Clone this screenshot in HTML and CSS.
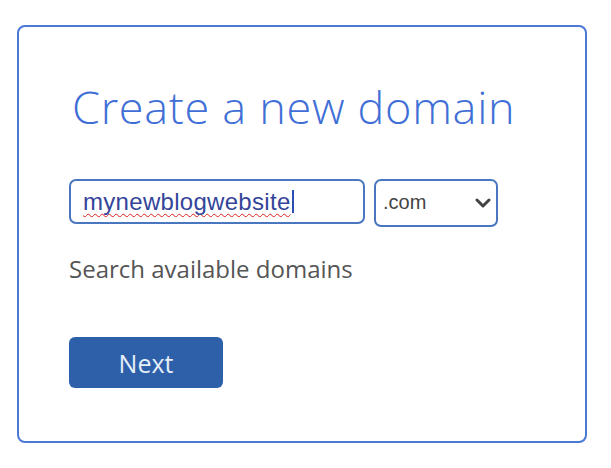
FILE: index.html
```html
<!DOCTYPE html>
<html lang="en">
<head>
    <meta charset="UTF-8">
    <meta name="viewport" content="width=device-width, initial-scale=1.0">
    <title>Create a new domain</title>
    <link rel="stylesheet" href="styles.css">
</head>
<body>
    <div class="card">
        <h1>Create a new domain</h1>
        <div class="domain-row">
            <div class="domain-input">
                <span class="misspelled">mynewblogwebsite</span><span class="caret"></span>
            </div>
            <div class="tld-select">
                <select>
                    <option>.com</option>
                    <option>.net</option>
                    <option>.org</option>
                </select>
                <svg class="chevron" width="16" height="10" viewBox="0 0 16 10">
                    <path d="M2 2 L8 8 L14 2" fill="none" stroke="#444" stroke-width="3" stroke-linejoin="round" stroke-linecap="round"/>
                </svg>
            </div>
        </div>
        <p class="hint">Search available domains</p>
        <button class="next-btn">Next</button>
    </div>
</body>
</html>
```

FILE: styles.css
```css
body {
    margin: 0;
    background-color: #fff;
    font-family: "Open Sans", "Noto Sans", sans-serif;
}

.card {
    box-sizing: border-box;
    margin: 25px 0 0 17px;
    width: 570px;
    height: 418px;
    padding: 54px 50px 0 50px;
    border: 2px solid #4a79d6;
    border-radius: 8px;
}

h1 {
    margin: 0 0 0 3px;
    font-size: 45px;
    line-height: 52px;
    font-weight: 300;
    letter-spacing: 0.7px;
    color: #3f6fd6;
}

.domain-row {
    display: flex;
    align-items: flex-start;
    gap: 9px;
    margin-top: 46px;
}

.domain-input {
    box-sizing: border-box;
    display: flex;
    align-items: center;
    width: 296px;
    height: 45px;
    padding: 0 11px 0 12px;
    border: 2px solid #4a76c0;
    border-radius: 7px;
    font-family: "Liberation Sans", Arial, sans-serif;
    font-size: 24px;
    line-height: 28px;
    letter-spacing: 0.3px;
    color: #34459a;
}

.misspelled {
    text-decoration: underline wavy #e02020;
    text-decoration-thickness: 1px;
    text-underline-offset: 3px;
    text-decoration-skip-ink: none;
}

.caret {
    width: 2px;
    height: 23px;
    margin-left: 1px;
    background-color: #2a4fb0;
}

.tld-select {
    position: relative;
}

.tld-select select {
    box-sizing: border-box;
    width: 124px;
    height: 48px;
    padding: 0 0 2px 7px;
    border: 2px solid #4a76c0;
    border-radius: 7px;
    background-color: #fff;
    appearance: none;
    -webkit-appearance: none;
    font-family: "Liberation Sans", Arial, sans-serif;
    font-size: 20px;
    color: #444;
    outline: none;
}

.chevron {
    position: absolute;
    top: 19px;
    right: 7px;
    pointer-events: none;
}

.hint {
    margin: 26px 0 0;
    font-size: 24px;
    line-height: 32px;
    color: #555;
}

.next-btn {
    display: block;
    margin-top: 52px;
    width: 154px;
    height: 51px;
    border: none;
    border-radius: 6px;
    background-color: #2e60aa;
    font-family: "Open Sans", "Noto Sans", sans-serif;
    font-size: 25px;
    color: #e6eef8;
}
```
